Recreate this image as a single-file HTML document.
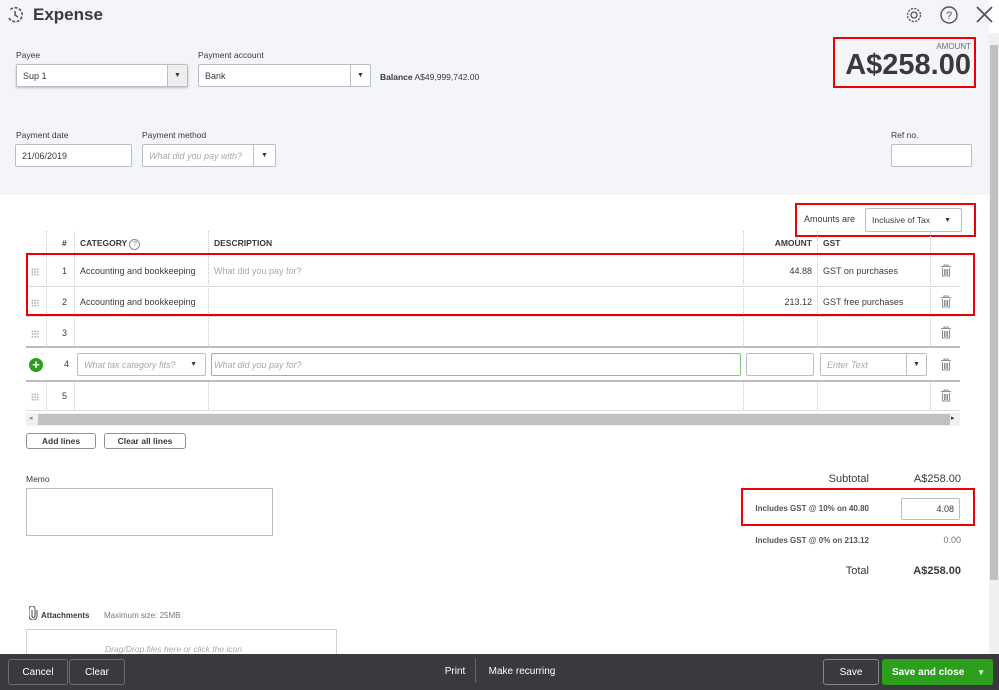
<!DOCTYPE html>
<html><head><meta charset="utf-8"><style>
*{box-sizing:border-box;margin:0;padding:0}
body{width:999px;height:690px;overflow:hidden;position:relative;background:#fff;font-family:"Liberation Sans",sans-serif;color:#393a3d;font-size:9px}
.a{position:absolute}
.lbl{font-size:8.5px;color:#393a3d}
.inp{position:absolute;background:#fff;border:1px solid #babec5;border-radius:2px;font-size:9px;padding-left:6px;display:flex;align-items:center}
.ph{color:#a5a8ad;font-style:italic}
.dd{position:absolute;right:0;top:0;bottom:0;width:20px;border-left:1px solid #babec5;display:flex;align-items:center;justify-content:center;font-size:7px}
.red{position:absolute;border:2px solid #e00;}
.vl{position:absolute;border-left:1px dotted #c8c8c8}
.hl{position:absolute;left:26px;width:934px;border-top:1px solid #dcdcdc}
.trash{position:absolute;left:940px}
.grip{position:absolute;left:31px;width:8px;height:8px;background-image:radial-gradient(#aaa 0.7px,transparent 0.8px);background-size:2.7px 2.7px}
.btn{position:absolute;border:1px solid #8d9096;border-radius:3px;font-size:8.5px;display:flex;align-items:center;justify-content:center;font-weight:bold;color:#393a3d;background:#fff}
.fb{position:absolute;color:#fff;font-size:10px;display:flex;align-items:center;justify-content:center}
</style></head><body>
<svg width="0" height="0" style="position:absolute"><defs><g id="tr"><path d="M1 2.5h10M4 2.5V1h4v1.5M2.5 4v8h7V4M4.5 5v6M6 5v6M7.5 5v6" fill="none" stroke="#8d9096" stroke-width="1.1"/></g></defs></svg>
<div class="a" style="left:0;top:0;width:989px;height:195px;background:#f4f5f8"></div>
<svg class="a" style="left:6px;top:6px" width="18" height="18" viewBox="0 0 18 18"><path d="M3 12 A7 7 0 1 0 4 4" fill="none" stroke="#555" stroke-width="1.6" stroke-dasharray="3 1.5"/><path d="M9 5v4l3 2" fill="none" stroke="#555" stroke-width="1.5"/></svg>
<div class="a" style="left:33px;top:5px;font-size:17px;font-weight:bold;color:#393a3d">Expense</div>
<svg class="a" style="left:905px;top:6px" width="18" height="18" viewBox="0 0 18 18"><circle cx="9" cy="9" r="3" fill="none" stroke="#555" stroke-width="1.3"/><circle cx="9" cy="9" r="6.5" fill="none" stroke="#555" stroke-width="1.3" stroke-dasharray="2.2 1.2"/></svg>
<svg class="a" style="left:940px;top:6px" width="18" height="18" viewBox="0 0 18 18"><circle cx="9" cy="9" r="8" fill="none" stroke="#555" stroke-width="1.4"/><text x="9" y="13" font-size="11" text-anchor="middle" fill="#555" font-family="Liberation Sans">?</text></svg>
<svg class="a" style="left:976px;top:6px" width="17" height="17" viewBox="0 0 17 17"><path d="M1 1L16 16M16 1L1 16" stroke="#555" stroke-width="1.8"/></svg>
<div class="a" style="left:989px;top:33px;width:10px;height:622px;background:#f0f0f0"></div>
<div class="a" style="left:990px;top:45px;width:8px;height:535px;background:#c1c1c1"></div>
<div class="a lbl" style="left:16px;top:50px">Payee</div>
<div class="inp" style="left:16px;top:64px;width:172px;height:23px;box-shadow:0 1px 2px #bbb">Sup 1<div class="dd" style="background:#eee">▼</div></div>
<div class="a lbl" style="left:198px;top:50px">Payment account</div>
<div class="inp" style="left:198px;top:64px;width:173px;height:23px">Bank<div class="dd">▼</div></div>
<div class="a" style="left:380px;top:72px;font-size:8.5px"><b>Balance</b> A$49,999,742.00</div>
<div class="red" style="left:833px;top:37px;width:143px;height:51px"></div>
<div class="a" style="left:900px;top:42px;width:71px;text-align:right;font-size:8px;color:#6b6c72">AMOUNT</div>
<div class="a" style="left:830px;top:49px;width:141px;text-align:right;font-size:29px;font-weight:bold;color:#393a3d">A$258.00</div>
<div class="a lbl" style="left:16px;top:130px">Payment date</div>
<div class="inp" style="left:15px;top:144px;width:117px;height:23px">21/06/2019</div>
<div class="a lbl" style="left:142px;top:130px">Payment method</div>
<div class="inp" style="left:142px;top:144px;width:134px;height:23px"><span class="ph">What did you pay with?</span><div class="dd" style="width:22px">▼</div></div>
<div class="a lbl" style="left:891px;top:130px">Ref no.</div>
<div class="inp" style="left:891px;top:144px;width:81px;height:23px"></div>
<div class="red" style="left:795px;top:203px;width:181px;height:34px"></div>
<div class="a" style="left:804px;top:214px;font-size:9px">Amounts are</div>
<div class="inp" style="left:865px;top:208px;width:97px;height:24px;font-size:8.5px">Inclusive of Tax<span style="position:absolute;right:10px;font-size:7px">▼</span></div>
<div class="vl" style="left:46px;top:231px;height:180px"></div>
<div class="vl" style="left:74px;top:231px;height:180px;border-left-style:solid;border-color:#e4e4e4"></div>
<div class="vl" style="left:208px;top:231px;height:180px"></div>
<div class="vl" style="left:743px;top:231px;height:180px"></div>
<div class="vl" style="left:817px;top:231px;height:180px"></div>
<div class="vl" style="left:930px;top:231px;height:180px"></div>
<div class="a" style="left:62px;top:238px;font-size:8.5px;font-weight:bold">#</div>
<div class="a" style="left:80px;top:238px;font-size:8.5px;font-weight:bold">CATEGORY <span style="display:inline-block;width:11px;height:11px;border:1px solid #888;border-radius:50%;font-size:7px;text-align:center;line-height:9px;font-weight:normal;color:#777">?</span></div>
<div class="a" style="left:214px;top:238px;font-size:8.5px;font-weight:bold">DESCRIPTION</div>
<div class="a" style="left:743px;top:238px;width:69px;text-align:right;font-size:8.5px;font-weight:bold">AMOUNT</div>
<div class="a" style="left:823px;top:238px;font-size:8.5px;font-weight:bold">GST</div>
<div class="hl" style="top:286px"></div>
<div class="hl" style="top:316px"></div>
<div class="hl" style="top:346px;border-top:2px solid #bdbdbd"></div>
<div class="hl" style="top:380px;border-top:2px solid #bdbdbd"></div>
<div class="hl" style="top:410px"></div>
<div class="a" style="left:27px;top:348px;width:933px;height:32px;background:#fff"></div>
<div class="red" style="left:26px;top:253px;width:949px;height:63px"></div>
<div class="grip" style="top:268px"></div><div class="grip" style="top:299px"></div><div class="grip" style="top:330px"></div><div class="grip" style="top:393px"></div>
<div class="a" style="left:62px;top:266px">1</div><div class="a" style="left:62px;top:297px">2</div><div class="a" style="left:62px;top:328px">3</div><div class="a" style="left:64px;top:359px">4</div><div class="a" style="left:62px;top:391px">5</div>
<div class="a" style="left:80px;top:266px">Accounting and bookkeeping</div>
<div class="a ph" style="left:214px;top:266px;font-style:normal">What did you pay for?</div>
<div class="a" style="left:80px;top:297px">Accounting and bookkeeping</div>
<div class="a" style="left:743px;top:266px;width:69px;text-align:right">44.88</div>
<div class="a" style="left:743px;top:297px;width:69px;text-align:right">213.12</div>
<div class="a" style="left:823px;top:266px">GST on purchases</div>
<div class="a" style="left:823px;top:297px">GST free purchases</div>
<svg class="trash" style="top:264px" width="12" height="13"><use href="#tr"/></svg>
<svg class="trash" style="top:295px" width="12" height="13"><use href="#tr"/></svg>
<svg class="trash" style="top:326px" width="12" height="13"><use href="#tr"/></svg>
<svg class="trash" style="top:358px" width="12" height="13"><use href="#tr"/></svg>
<svg class="trash" style="top:389px" width="12" height="13"><use href="#tr"/></svg>
<div class="a" style="left:29px;top:358px;width:14px;height:14px;border-radius:50%;background:#2ca01c;color:#fff;font-weight:bold;font-size:13px;line-height:13px;text-align:center">+</div>
<div class="inp" style="left:77px;top:353px;width:129px;height:23px"><span class="ph">What tax category fits?</span><span style="position:absolute;right:8px;font-size:7px">▼</span></div>
<div class="inp" style="left:211px;top:353px;width:530px;height:23px;border-color:#7fc877;padding-left:2px"><span class="ph">What did you pay for?</span></div>
<div class="inp" style="left:746px;top:353px;width:68px;height:23px"></div>
<div class="inp" style="left:820px;top:353px;width:107px;height:23px"><span class="ph">Enter Text</span><div class="dd">▼</div></div>
<div class="a" style="left:26px;top:413px;width:934px;height:13px;background:#f0f0f0"></div>
<div class="a" style="left:38px;top:414px;width:912px;height:11px;background:#c1c1c1"></div>
<div class="a" style="left:29px;top:414px;font-size:7px;color:#888">◂</div>
<div class="a" style="left:951px;top:414px;font-size:7px;color:#333">▸</div>
<div class="btn" style="left:26px;top:433px;width:70px;height:16px">Add lines</div>
<div class="btn" style="left:104px;top:433px;width:82px;height:16px">Clear all lines</div>
<div class="a lbl" style="left:26px;top:474px">Memo</div>
<div class="a" style="left:26px;top:488px;width:247px;height:48px;border:1px solid #babec5"></div>
<div class="a" style="left:760px;top:473px;width:109px;text-align:right;font-size:11px">Subtotal</div>
<div class="a" style="left:880px;top:473px;width:81px;text-align:right;font-size:11px">A$258.00</div>
<div class="red" style="left:741px;top:488px;width:234px;height:38px"></div>
<div class="a" style="left:750px;top:504px;width:119px;text-align:right;font-size:8px;font-weight:bold;color:#555">Includes GST @ 10% on 40.80</div>
<div class="inp" style="left:901px;top:498px;width:59px;height:22px;justify-content:flex-end;padding-right:5px">4.08</div>
<div class="a" style="left:740px;top:536px;width:129px;text-align:right;font-size:8px;font-weight:bold;color:#555">Includes GST @ 0% on 213.12</div>
<div class="a" style="left:880px;top:535px;width:81px;text-align:right;color:#777">0.00</div>
<div class="a" style="left:760px;top:565px;width:109px;text-align:right;font-size:11px">Total</div>
<div class="a" style="left:880px;top:565px;width:81px;text-align:right;font-size:11px;font-weight:bold">A$258.00</div>
<svg class="a" style="left:29px;top:606px" width="9" height="14" viewBox="0 0 9 14"><path d="M3 4v6a1.5 1.5 0 0 0 3 0V3a3 3 0 0 0-6 0v7a4 4 0 0 0 8 0V4" fill="none" stroke="#555" stroke-width="1.1"/></svg>
<div class="a" style="left:41px;top:611px;font-size:8px;font-weight:bold">Attachments</div>
<div class="a" style="left:104px;top:611px;font-size:8px;color:#777">Maximum size: 25MB</div>
<div class="a" style="left:26px;top:629px;width:311px;height:30px;border:1px solid #d0d0d0"></div>
<div class="a ph" style="left:105px;top:644px;font-size:8.5px">Drag/Drop files here or click the icon</div>
<div class="a" style="left:0;top:654px;width:999px;height:36px;background:#393a3d"></div>
<div class="fb" style="left:8px;top:659px;width:60px;height:26px;border:1px solid #6b6c72;border-radius:3px">Cancel</div>
<div class="fb" style="left:69px;top:659px;width:56px;height:26px;border:1px solid #6b6c72;border-radius:3px">Clear</div>
<div class="fb" style="left:440px;top:660px;width:30px;height:22px">Print</div>
<div class="a" style="left:475px;top:658px;width:1px;height:25px;background:#666"></div>
<div class="fb" style="left:484px;top:660px;width:76px;height:22px">Make recurring</div>
<div class="fb" style="left:823px;top:659px;width:56px;height:26px;border:1px solid #888;border-radius:3px">Save</div>
<div class="fb" style="left:882px;top:659px;width:111px;height:26px;background:#2ca01c;border-radius:3px;justify-content:flex-start;padding-left:10px;font-weight:bold">Save and close<span style="position:absolute;right:8px;font-size:8px">▼</span></div>
</body></html>
